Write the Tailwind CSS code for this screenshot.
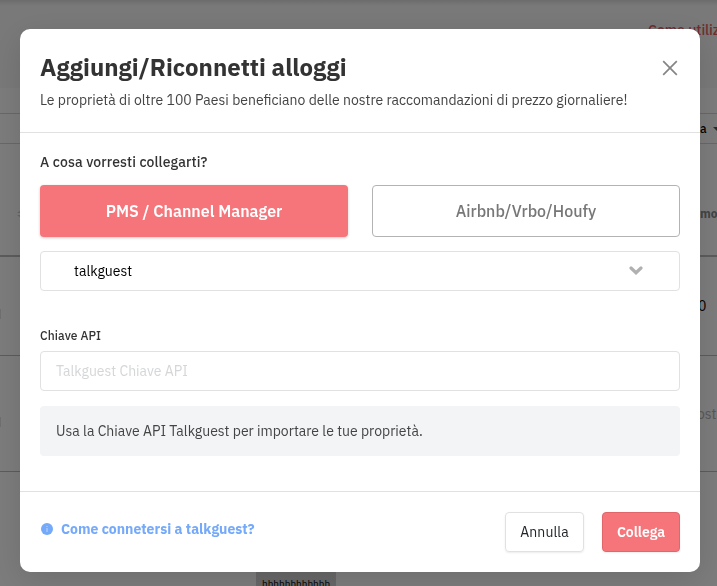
<!DOCTYPE html>
<html lang="it">
<head>
  <meta charset="UTF-8" />
  <meta name="viewport" content="width=device-width, initial-scale=1" />
  <title>Aggiungi/Riconnetti alloggi</title>
  <script src="https://cdn.jsdelivr.net/npm/@tailwindcss/browser@4"></script>
</head>
<body class="h-screen overflow-hidden bg-[#f8f8f8] font-['IBM_Plex_Sans',Roboto,sans-serif] text-sm text-[#333]">
  <!-- Page behind the dialog -->
  <div class="h-[586px] w-[717px] overflow-hidden" aria-hidden="true">
    <header class="flex h-[88px] justify-end bg-linear-to-b from-[#d8d8d8] to-[#f3f3f3] to-[6px] pt-5">
      <span class="w-[69px] whitespace-nowrap leading-5 font-medium text-[#e05a60]">Come utilizzare</span>
    </header>
    <div class="h-[25px]"></div>
    <div class="flex h-[31px] items-center justify-end border-y border-[#d0d0d0] text-xs font-medium text-black">
      <span class="w-[13px]">a</span>
      <svg class="h-1 w-[4px]" viewBox="0 0 4 4" fill="#555"><path d="M0 0h8L4 4z" /></svg>
    </div>
    <div class="flex h-[113px] items-center justify-between border-b-2 border-[#b8b8b8] pt-7 pl-[17px] text-xs font-bold text-[#888]">
      <svg class="size-2" viewBox="0 0 8 8" fill="#ccc"><path d="M4 0l4 3H0zM4 8l4-3H0z" /></svg>
      <span class="w-[17px] whitespace-nowrap">mostra</span>
    </div>
    <div class="flex h-[99px] items-center justify-between border-b border-[#b8b8b8]">
      <span class="mt-4 h-2.5 w-px bg-[#dedede]"></span>
      <span class="w-[19px] text-black">0</span>
    </div>
    <div class="flex h-[116px] items-center justify-between border-b border-[#b8b8b8]">
      <span class="mt-4 h-2.5 w-px bg-[#dedede]"></span>
      <span class="w-[20px] whitespace-nowrap text-[#b0b0b0]">ostare</span>
    </div>
    <div class="ml-64 h-[114px] w-20 bg-[#cfcfcf] pt-[89px] pl-1.5 text-[10px] leading-[15px] text-black">
      <p>hhhhhhhhhhhh</p>
      <p>hhhhhhhhhhhh</p>
    </div>
  </div>

  <div class="fixed inset-0 bg-black/50 px-5 pt-[29px]">
    <div role="dialog" aria-modal="true" class="h-[543px] w-[680px] rounded-[10px] bg-white shadow-[0_8px_32px_rgba(0,0,0,0.12)]">
      <div class="flex h-[104px] justify-between border-b border-[#e1e1e1] px-5 pt-[22px]">
        <div>
          <h1 class="text-2xl leading-8 font-bold">Aggiungi/Riconnetti alloggi</h1>
          <p class="mt-[7px] leading-5 text-[#444]">Le proprietà di oltre 100 Paesi beneficiano delle nostre raccomandazioni di prezzo giornaliere!</p>
        </div>
        <button type="button" aria-label="Chiudi" class="mt-[9px] mr-[2px] size-4">
          <svg class="size-4" viewBox="0 0 16 16" fill="none" stroke="#858585" stroke-width="1.7"><path d="M1.2 1.2l13.6 13.6M14.8 1.2L1.2 14.8" /></svg>
        </button>
      </div>

      <div class="h-[358px] px-5 pt-[19px]">
        <p class="leading-5 font-medium tracking-[0.11px]">A cosa vorresti collegarti?</p>
        <div class="mt-[13px] grid grid-cols-2 gap-6">
          <button type="button" class="h-[52px] rounded-[4px] bg-[#f5757b] text-base font-semibold text-white shadow-[0_1px_3px_rgba(0,0,0,0.2)]">PMS / Channel Manager</button>
          <button type="button" class="h-[52px] rounded-[4px] border border-[#b3b3b3] text-base font-medium text-[#777]">Airbnb/Vrbo/Houfy</button>
        </div>
        <div class="mt-3.5 flex h-10 items-center justify-between rounded-[4px] border border-[#e1e1e1] pr-9 pl-[33px] text-black">
          <span>talkguest</span>
          <svg class="-mt-0.5 h-[9px] w-3.5" viewBox="0 0 14 9" fill="none" stroke="#b0b0b0" stroke-width="3.2" stroke-linecap="round"><path d="M2 2l5 4.7L12 2" /></svg>
        </div>
        <label for="apiKey" class="mt-[37px] block text-xs leading-4 font-medium tracking-[0.1px]">Chiave API</label>
        <input type="text" id="apiKey" placeholder="Talkguest Chiave API" class="mt-[7px] block h-10 w-full rounded-[4px] border border-[#e1e1e1] px-[15px] placeholder:text-[#d4d6d8]" />
        <p class="mt-[15px] h-[50px] rounded-[4px] bg-[#f3f4f6] px-4 leading-[50px] text-[#444]">Usa la Chiave API Talkguest per importare le tue proprietà.</p>
      </div>

      <div class="flex items-start justify-between border-t border-[#e1e1e1] px-5 pt-5">
        <a href="#" class="mt-[7px] flex items-center pl-px leading-5 font-bold text-[#75a9f9]">
          <svg class="mr-2 size-3" viewBox="0 0 12 12"><circle cx="6" cy="6" r="6" fill="#75a9f9" /><path d="M6 3v1M6 5v4" stroke="#b4d0ff" stroke-width="1.2" /></svg>
          Come connetersi a talkguest?
        </a>
        <div class="flex gap-[18px]">
          <button type="button" class="h-10 w-[79px] rounded-[4px] border border-[#e1e1e1] tracking-[0.1px] text-[#212529] shadow-[0_1px_2px_rgba(0,0,0,0.08)]">Annulla</button>
          <button type="button" class="h-10 w-[78px] rounded-[4px] border border-[#e0666c] bg-[#f5757b] font-semibold text-white shadow-[0_1px_2px_rgba(0,0,0,0.08)]">Collega</button>
        </div>
      </div>
    </div>
  </div>
</body>
</html>
